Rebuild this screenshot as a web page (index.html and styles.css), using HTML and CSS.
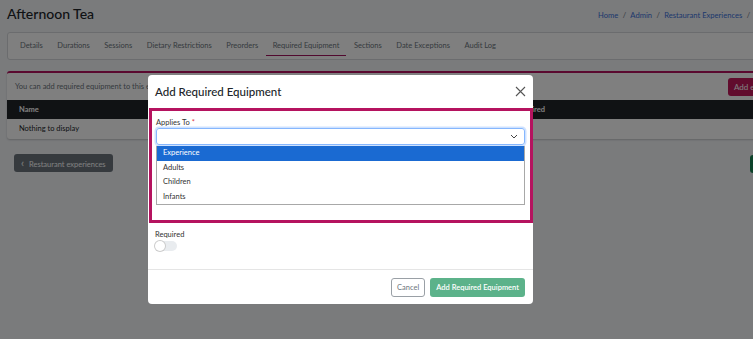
FILE: index.html
```html
<!DOCTYPE html>
<html lang="en">

<head>
    <meta charset="UTF-8">
    <meta name="viewport" content="width=device-width, initial-scale=1.0">
    <title>Afternoon Tea</title>
    <link rel="stylesheet" href="styles.css">
</head>

<body>
    <div class="page">
        <div class="page-head">
            <h1>Afternoon Tea</h1>
            <div class="crumbs">
                <a href="#">Home</a> <span>/</span> <a href="#">Admin</a> <span>/</span>
                <a href="#">Restaurant Experiences</a> <span>/</span> Edit
            </div>
        </div>

        <div class="tabs-card">
            <a class="tab">Details</a>
            <a class="tab">Durations</a>
            <a class="tab">Sessions</a>
            <a class="tab">Dietary Restrictions</a>
            <a class="tab">Preorders</a>
            <a class="tab active">Required Equipment</a>
            <a class="tab">Sections</a>
            <a class="tab">Date Exceptions</a>
            <a class="tab">Audit Log</a>
        </div>

        <div class="card">
            <div class="card-top">
                <span class="hint">You can add required equipment to this experience</span>
                <button class="btn-add">Add equipment</button>
            </div>
            <div class="table-head">
                <span class="col-name">Name</span>
                <span class="col-req">Required</span>
            </div>
            <div class="table-row">Nothing to display</div>
        </div>

        <div class="actions">
            <div><button class="btn-back"><span class="chev">&#8249;</span> Restaurant experiences</button></div>
            <div><button class="btn-save">Save</button></div>
        </div>
    </div>

    <!-- затемнение и модальное окно -->
    <div class="backdrop"></div>
    <div class="modal">
        <div class="modal-header">
            <div class="modal-title">Add Required Equipment</div>
            <svg class="close" width="11" height="11" viewBox="0 0 11 11">
                <path d="M1 1 L10 10 M10 1 L1 10" stroke="#555" stroke-width="1.1" fill="none" />
            </svg>
        </div>
        <div class="highlight">
            <div class="label">Applies To <span class="req">*</span></div>
            <div class="select">
                <svg width="8" height="5" viewBox="0 0 8 5">
                    <path d="M1 1 L4 4 L7 1" stroke="#444" stroke-width="1" fill="none" />
                </svg>
            </div>
            <div class="options">
                <div class="option selected">Experience</div>
                <div class="option">Adults</div>
                <div class="option">Children</div>
                <div class="option">Infants</div>
            </div>
        </div>
        <div class="modal-body">
            <div class="label">Required</div>
            <div class="switch"><span class="knob"></span></div>
        </div>
        <div class="modal-footer">
            <button class="btn-cancel">Cancel</button>
            <button class="btn-submit">Add Required Equipment</button>
        </div>
    </div>
</body>

</html>
```

FILE: styles.css
```css
body {
    margin: 0;
    overflow: hidden;
    background-color: #f4f6f9;
    font-family: Lato, "Liberation Sans", sans-serif;
    color: #212529;
}

button {
    font-family: inherit;
    border: none;
    border-radius: 3px;
    cursor: pointer;
    white-space: nowrap;
}

.page {
    width: 820px;
    padding: 0 7px;
}

.page-head {
    display: grid;
    grid-template-columns: 591px auto;
    align-items: center;
    height: 27px;
}

h1 {
    margin: 0;
    font-size: 14px;
    font-weight: 500;
}

.crumbs {
    font-size: 7.6px;
    color: #6c757d;
    padding-top: 2px;
    white-space: nowrap;
}

.crumbs a {
    color: #3b72d9;
    text-decoration: none;
}

.crumbs span {
    margin: 0 2.5px;
}

.tabs-card {
    display: flex;
    margin-top: 5px;
    height: 28px;
    padding-left: 5px;
    background: #fff;
    border: 1px solid #d6d9dd;
    border-radius: 3px;
    box-sizing: border-box;
}

.tab {
    position: relative;
    padding: 0 7px;
    margin-right: 0.5px;
    font-size: 7.5px;
    line-height: 26px;
    color: #6c757d;
}

.tab.active::after {
    content: "";
    position: absolute;
    left: 0;
    right: 0;
    bottom: 3px;
    height: 1.5px;
    background: #a3125e;
}

.card {
    margin-top: 11px;
    background: #fff;
    border-top: 2px solid #b5135f;
    border-radius: 3px;
    box-shadow: 0 1px 2px rgba(0, 0, 0, 0.2);
}

.card-top {
    display: grid;
    grid-template-columns: 713px auto;
    align-items: center;
    height: 27px;
    padding-left: 8px;
}

.hint {
    font-size: 7.5px;
    color: #6c757d;
}

.btn-add {
    justify-self: start;
    height: 18px;
    padding: 0 6px;
    background: #c2185b;
    color: #fff;
    font-size: 8px;
}

.table-head {
    position: relative;
    height: 19px;
    background: #212529;
    color: #fff;
    font-size: 7.5px;
    font-weight: 700;
    line-height: 19px;
    padding-left: 12px;
}

.col-req {
    position: absolute;
    left: 508px;
}

.table-row {
    height: 20px;
    line-height: 20px;
    font-size: 7.5px;
    padding-left: 12px;
}

.actions {
    display: grid;
    grid-template-columns: 736px auto;
    margin-top: 12px;
    padding-left: 7px;
}

.btn-back {
    height: 18px;
    padding: 0 7px;
    background: #6c757d;
    color: #fff;
    font-size: 7.5px;
}

.chev {
    font-size: 11px;
    margin-right: 3px;
}

.btn-save {
    height: 18px;
    width: 60px;
    background: #198754;
    color: #fff;
    font-size: 8px;
}

.backdrop {
    position: fixed;
    inset: 0;
    background: rgba(0, 0, 0, 0.5);
}

.modal {
    position: absolute;
    left: 148px;
    top: 75px;
    width: 385px;
    background: #fff;
    border-radius: 4px;
}

.modal-header {
    display: flex;
    justify-content: space-between;
    align-items: center;
    height: 33px;
    padding: 0 7px 0 7px;
}

.modal-title {
    font-size: 11.5px;
    font-weight: 500;
}

.highlight {
    margin-left: 1px;
    border: 3px solid #b5135f;
    padding: 7px 5px 15px 4px;
}

.label {
    font-size: 7.5px;
    color: #333;
    line-height: 10px;
}

.req {
    color: #dc3545;
}

.select {
    display: flex;
    justify-content: flex-end;
    align-items: center;
    height: 17px;
    padding-right: 6px;
    border: 1px solid #86b7fe;
    border-radius: 3px;
    box-shadow: 0 0 0 1.5px rgba(13, 110, 253, 0.2);
    box-sizing: border-box;
}

.options {
    border: 1px solid #a8a8a8;
    border-top: none;
    margin-top: 1px;
}

.option {
    height: 14.5px;
    line-height: 14.5px;
    padding-left: 6px;
    font-size: 7.5px;
    color: #333;
}

.option.selected {
    background: #1a6ad2;
    color: #fff;
}

.modal-body {
    padding: 7px 7px 18px;
}

.modal-body .label {
    margin-bottom: 1px;
}

.switch {
    position: relative;
    width: 22px;
    height: 10px;
    border-radius: 6px;
    background: #e9ecef;
}

.knob {
    position: absolute;
    left: 0;
    top: 0;
    width: 10px;
    height: 10px;
    border-radius: 50%;
    background: #fff;
    box-shadow: 0 0 0 1px #ccc;
}

.modal-footer {
    display: flex;
    justify-content: flex-end;
    gap: 5px;
    padding: 8px 8px 7px;
    border-top: 1px solid #e5e5e5;
}

.btn-cancel {
    height: 19px;
    padding: 0 5px;
    background: #fff;
    border: 1px solid #9aa0a6;
    color: #6c757d;
    font-size: 7.5px;
}

.btn-submit {
    height: 19px;
    padding: 0 6px;
    background: #5cb28a;
    color: #fff;
    font-size: 7.5px;
    font-weight: 600;
}
```
